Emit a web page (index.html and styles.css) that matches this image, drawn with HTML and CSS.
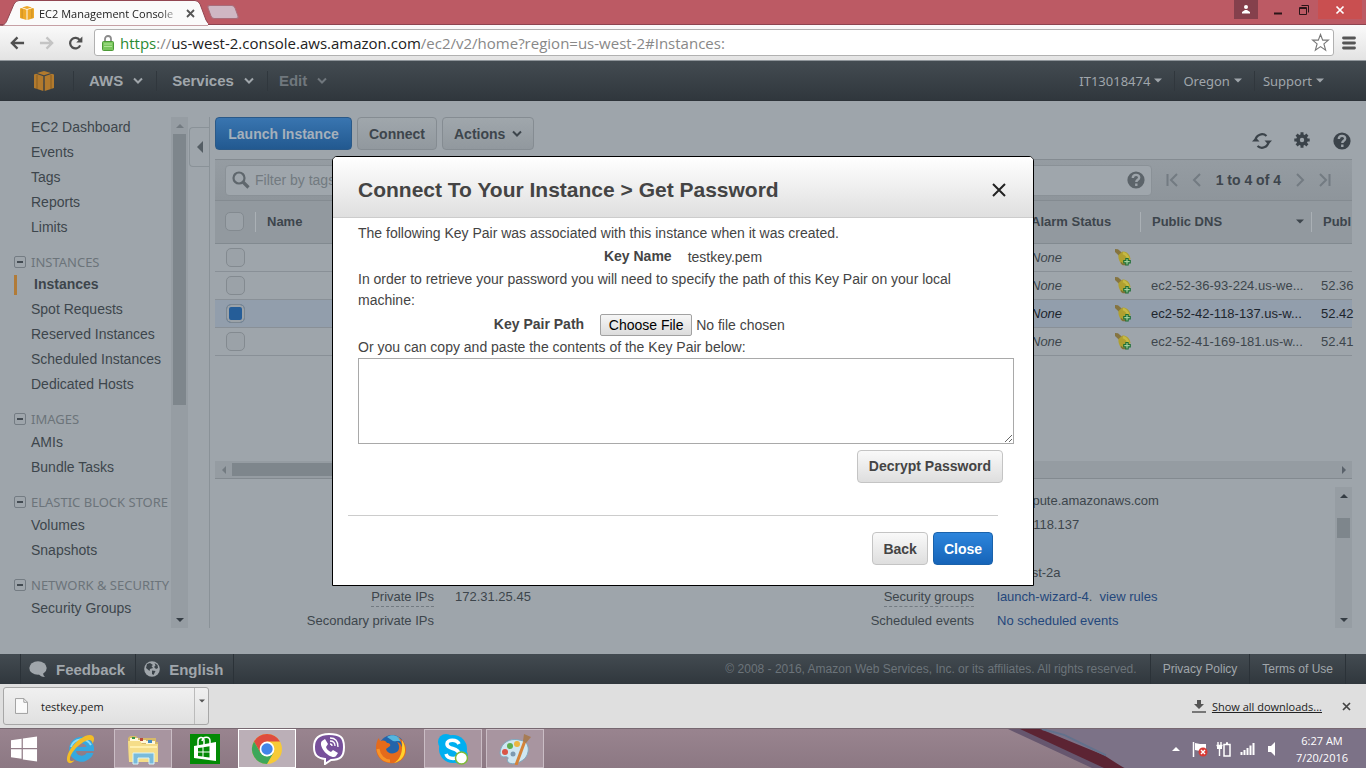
FILE: index.html
```html
<!DOCTYPE html>
<html lang="en">
<head>
<meta charset="utf-8">
<title>EC2 Management Console</title>
<link rel="stylesheet" href="styles.css">
</head>
<body>
<svg class="defs" aria-hidden="true">
  <symbol id="cube" viewBox="0 0 20 20"><path d="M10 0l7 2-7 2.200-7-2.200zM0 3.500l2-.7 7.300 2.400V20L0 17zM20 3.500l-2-.7-7.300 2.400V20L20 17z" fill="currentColor"/><path d="M3 4v14M17 4v14" stroke="#000" stroke-opacity=".12" stroke-width="2"/></symbol>
  <symbol id="chev" viewBox="0 0 10 8"><path d="M1 1.500L5 5.500L9 1.500" fill="none" stroke="currentColor" stroke-width="2"/></symbol>
  <symbol id="caret" viewBox="0 0 8 5"><path d="M0 .5h8L4 4.500z" fill="currentColor"/></symbol>
  <symbol id="help" viewBox="0 0 18 18"><circle cx="9" cy="9" r="8.600" fill="currentColor"/><path d="M5.800 7c0-4 6.400-4.200 6.400-.6 0 2.300-2.900 2.300-2.900 4.600M9.300 12.500v2.400" fill="none" stroke="#9da4aa" stroke-width="2.400"/></symbol>
  <symbol id="minus" viewBox="0 0 12 12"><rect x=".5" y=".5" width="11" height="11" rx="1.500" fill="none" stroke="#747c83"/><path d="M3 6h6" stroke="#434b52" stroke-width="2"/></symbol>
  <symbol id="bell" viewBox="0 0 18 18"><path d="M1 1l3 .3 4 3.500-3 3L1 4z" fill="#857440"/><path d="M4.500 7l4-3.500c4 0 7 2 8 7.500L10 16.500H7.500C5 13 4 10 4.500 7z" fill="#b0a02f"/><path d="M9 5c3 1 4.500 3 5.500 6" fill="none" stroke="#c6b944" stroke-width="2.500"/><path d="M7 14.500l2 2h3" stroke="#7c6f3a" fill="none" stroke-width="1.300"/><path d="M13 10v7.500M9.200 13.700h7.600" stroke="#1d6f35" stroke-width="3.400"/><path d="M13 11v5.400M10.300 13.700h5.400" stroke="#a4cf9f" stroke-width="1.200"/></symbol>
</svg>
<div class="screen">
  <header class="tabstrip">
    <div class="tab">
      <svg class="tab-shape" viewBox="0 0 208 26" preserveAspectRatio="none"><path d="M0 26C5 25 6 23 8 18L14 4Q16 .5 19 .5H195Q198 .5 200 4L206 20Q208 25 213 26z" fill="#fafafa" stroke="#924651"/></svg>
      <svg class="favicon"><use href="#cube"/></svg>
      <span class="tab-title">EC2 Management Console</span>
      <button class="tab-close" aria-label="Close tab"><svg viewBox="0 0 9 9"><path d="M1 1l7 7M8 1L1 8" stroke="#555" stroke-width="1.800"/></svg></button>
    </div>
    <button class="newtab" aria-label="New tab"></button>
    <div class="window-controls">
      <button class="user" aria-label="User"><svg viewBox="0 0 10 10"><circle cx="5" cy="2" r="2" fill="#fff"/><path d="M1 8.500V7l3-2h2l3 2v1.500z" fill="#fff"/></svg></button>
      <button class="win" aria-label="Minimize"><svg viewBox="0 0 10 10"><path d="M1 8.500h8" stroke="#2b1518" stroke-width="2"/></svg></button>
      <button class="win" aria-label="Restore"><svg viewBox="0 0 10 10"><path d="M2.500.5h7v7M.5 2.500h7v7h-7zM.5 3.500h7" fill="none" stroke="#2b1518"/></svg></button>
      <button class="win win-close" aria-label="Close window"><svg viewBox="0 0 10 10"><path d="M1.500 1.500l7 7M8.500 1.500l-7 7" stroke="#fff" stroke-width="1.700"/></svg></button>
    </div>
  </header>
  <div class="toolbar">
    <button class="nav-btn" aria-label="Back"><svg viewBox="0 0 16 14"><path d="M15 7H2M8 1L2 7l6 6" fill="none" stroke="#505050" stroke-width="2.500"/></svg></button>
    <button class="nav-btn" aria-label="Forward"><svg viewBox="0 0 16 14"><path d="M1 7h13M8 1l6 6-6 6" fill="none" stroke="#c4c4c4" stroke-width="2.500"/></svg></button>
    <button class="nav-btn" aria-label="Reload"><svg viewBox="0 0 16 14"><path d="M13 9.500A5.600 5.600 0 1 1 12.500 4" fill="none" stroke="#505050" stroke-width="2.400"/><path d="M15.300 0v6.500H8.800z" fill="#505050"/></svg></button>
    <div class="address">
      <svg class="lock" viewBox="0 0 12 16"><path d="M3 7V4a3 3 0 0 1 6 0v3" fill="none" stroke="#8b8b8b" stroke-width="1.800"/><rect x=".5" y="6.500" width="11" height="9" rx="1" fill="#79c65d" stroke="#4c9a37"/><path d="M2 9h8M2 11.500h8" stroke="#b0e497"/></svg>
      <span class="url"><span class="secure">https</span>://<span class="host">us-west-2.console.aws.amazon.com</span>/ec2/v2/home?region=us-west-2#Instances:</span>
      <button class="star" aria-label="Bookmark"><svg viewBox="0 0 20 20"><path d="M10 1.500l2.300 6h6l-4.700 4 1.800 6.500L10 14.300 4.600 18l1.800-6.500-4.700-4h6z" fill="#fff" stroke="#777" stroke-width="1.200"/></svg></button>
    </div>
    <button class="menu" aria-label="Menu"><svg viewBox="0 0 14 14"><path d="M1.500 2h11M1.500 7h11M1.500 12h11" stroke="#555" stroke-width="2.800" stroke-linecap="round"/></svg></button>
  </div>

  <div class="page">
    <header class="console-header">
      <a class="logo" href="#" aria-label="Home"><svg><use href="#cube"/></svg></a>
      <nav class="console-nav">
        <a class="nav-aws" href="#">AWS <svg class="chev"><use href="#chev"/></svg></a>
        <a class="nav-services" href="#">Services <svg class="chev"><use href="#chev"/></svg></a>
        <a class="nav-edit" href="#">Edit <svg class="chev"><use href="#chev"/></svg></a>
      </nav>
      <nav class="account-nav">
        <a href="#">IT13018474 <svg class="caret"><use href="#caret"/></svg></a>
        <a href="#">Oregon <svg class="caret"><use href="#caret"/></svg></a>
        <a href="#">Support <svg class="caret"><use href="#caret"/></svg></a>
      </nav>
    </header>

    <div class="body">
      <aside class="side">
        <nav class="side-nav">
          <a href="#">EC2 Dashboard</a><a href="#">Events</a><a href="#">Tags</a><a href="#">Reports</a><a href="#">Limits</a>
          <h2><svg><use href="#minus"/></svg>INSTANCES</h2>
          <a class="current" href="#">Instances</a><a href="#">Spot Requests</a><a href="#">Reserved Instances</a><a href="#">Scheduled Instances</a><a href="#">Dedicated Hosts</a>
          <h2><svg><use href="#minus"/></svg>IMAGES</h2>
          <a href="#">AMIs</a><a href="#">Bundle Tasks</a>
          <h2><svg><use href="#minus"/></svg>ELASTIC BLOCK STORE</h2>
          <a href="#">Volumes</a><a href="#">Snapshots</a>
          <h2><svg><use href="#minus"/></svg>NETWORK &amp; SECURITY</h2>
          <a href="#">Security Groups</a>
        </nav>
        <div class="vbar side-bar"><i class="arrow up dim"></i><i class="thumb"></i><i class="arrow down"></i></div>
        <div class="gutter"><button class="collapse" aria-label="Collapse"><i></i></button></div>
      </aside>

      <main class="content">
        <div class="actions">
          <button class="btn primary">Launch Instance</button>
          <button class="btn">Connect</button>
          <button class="btn">Actions <svg class="chev"><use href="#chev"/></svg></button>
          <div class="tools">
            <button aria-label="Refresh"><svg viewBox="0 0 20 18"><path d="M3.500 8A6.600 6.600 0 0 1 14.500 4M16.500 10A6.600 6.600 0 0 1 5.500 14" fill="none" stroke="currentColor" stroke-width="2.200"/><path d="M0 9.500h7.500L3.800 5.500zM12.500 8.500H20l-3.700 4z" fill="currentColor"/></svg></button>
            <button aria-label="Settings"><svg viewBox="0 0 20 18"><circle cx="10" cy="8" r="4" fill="none" stroke="currentColor" stroke-width="3.600"/><path d="M10 .3v3M10 12.700v3M2.300 8h3M14.700 8h3M4.600 2.600l2 2M13.400 11.400l2 2M4.600 13.400l2-2M13.400 4.600l2-2" stroke="currentColor" stroke-width="3"/></svg></button>
            <button aria-label="Help"><svg><use href="#help"/></svg></button>
          </div>
        </div>
        <section class="grid">
          <div class="filter">
            <div class="search">
              <svg class="magnify" viewBox="0 0 18 18"><circle cx="7" cy="7" r="5.500" fill="none" stroke="#5f676d" stroke-width="2.200"/><path d="M11 11l5.500 5.500" stroke="#5f676d" stroke-width="3.200"/></svg>
              <input type="text" aria-label="Filter instances" placeholder="Filter by tags and attributes or search by keyword">
              <svg class="search-help"><use href="#help"/></svg>
            </div>
            <div class="pager">
              <button aria-label="First page"><svg viewBox="0 0 12 14"><path d="M1.500 1v12M11 1L5 7l6 6"/></svg></button>
              <button aria-label="Previous page"><svg viewBox="0 0 12 14"><path d="M9 1L3 7l6 6"/></svg></button>
              <span>1 to 4 of 4</span>
              <button aria-label="Next page"><svg viewBox="0 0 12 14"><path d="M3 1l6 6-6 6"/></svg></button>
              <button aria-label="Last page"><svg viewBox="0 0 12 14"><path d="M10.500 1v12M1 1l6 6-6 6"/></svg></button>
            </div>
          </div>
          <table class="instances">
            <colgroup><col class="c-check"><col><col class="c-alarm"><col class="c-dns"><col class="c-ip"></colgroup>
            <thead><tr><th><input type="checkbox" aria-label="Select all"></th><th><span>Name</span></th><th>Alarm Status</th><th><span>Public DNS<svg class="caret"><use href="#caret"/></svg></span></th><th><span>Publ</span></th></tr></thead>
            <tbody>
              <tr><td><input type="checkbox" aria-label="Select instance 1"></td><td></td><td><div class="alarm"><em>None</em><svg><use href="#bell"/></svg></div></td><td></td><td></td></tr>
              <tr><td><input type="checkbox" aria-label="Select instance 2"></td><td></td><td><div class="alarm"><em>None</em><svg><use href="#bell"/></svg></div></td><td>ec2-52-36-93-224.us-we...</td><td>52.36</td></tr>
              <tr class="selected"><td><input type="checkbox" checked aria-label="Select instance 3"></td><td></td><td><div class="alarm"><em>None</em><svg><use href="#bell"/></svg></div></td><td>ec2-52-42-118-137.us-w...</td><td>52.42</td></tr>
              <tr><td><input type="checkbox" aria-label="Select instance 4"></td><td></td><td><div class="alarm"><em>None</em><svg><use href="#bell"/></svg></div></td><td>ec2-52-41-169-181.us-w...</td><td>52.41</td></tr>
            </tbody>
          </table>
          <div class="hbar"><i class="arrow left"></i><i class="thumb"></i><i class="arrow right"></i></div>
        </section>
        <section class="details">
          <dl class="detail-col left">
            <dt><span class="hint">Private IPs</span></dt><dd>172.31.25.45</dd>
            <dt>Secondary private IPs</dt><dd></dd>
          </dl>
          <dl class="detail-col right">
            <dt></dt><dd>2.compute.amazonaws.com</dd>
            <dt></dt><dd>52.42.118.137</dd>
            <dt></dt><dd></dd>
            <dt></dt><dd>us-west-2a</dd>
            <dt><span class="hint">Security groups</span></dt><dd><a href="#">launch-wizard-4</a>.&nbsp; <a href="#">view rules</a></dd>
            <dt>Scheduled events</dt><dd><a href="#">No scheduled events</a></dd>
          </dl>
          <div class="vbar detail-bar"><i class="arrow up"></i><i class="thumb"></i><i class="arrow down"></i></div>
        </section>
      </main>
    </div>

    <footer class="console-footer">
      <a class="feedback" href="#"><svg viewBox="0 0 18 16"><ellipse cx="9" cy="7" rx="8.700" ry="6.800" fill="currentColor"/><path d="M9 12c2 3 4 4 7 4-2-2-2-3-1.500-6z" fill="currentColor"/></svg>Feedback</a>
      <a class="language" href="#"><svg viewBox="0 0 16 16"><circle cx="8" cy="8" r="7.800" fill="currentColor"/><path d="M3 3l3-1 3 2-1.500 1L9 7l-3 1-.5 2L2 7zM10.500 2l3 2 .5 3-2 1-2-2 1.500-1.500zM8 9.500l3.500.5L9.500 14l-1.500-1z" fill="#3a4248"/></svg>English</a>
      <small>© 2008 - 2016, Amazon Web Services, Inc. or its affiliates. All rights reserved.</small>
      <a class="legal" href="#">Privacy Policy</a>
      <a class="legal last" href="#">Terms of Use</a>
    </footer>

    <div class="overlay">
      <section class="modal" role="dialog" aria-labelledby="modal-title">
        <header>
          <h1 id="modal-title">Connect To Your Instance &gt; Get Password</h1>
          <button class="modal-close" aria-label="Close dialog"><svg viewBox="0 0 14 14"><path d="M1 1l12 12M13 1L1 13" stroke="#222" stroke-width="2"/></svg></button>
        </header>
        <div class="modal-body">
          <p>The following Key Pair was associated with this instance when it was created.</p>
          <div class="field key-name"><strong>Key Name</strong><span>testkey.pem</span></div>
          <p>In order to retrieve your password you will need to specify the path of this Key Pair on your local machine:</p>
          <div class="field key-path"><label for="key-file">Key Pair Path</label><input id="key-file" type="file"></div>
          <label class="paste" for="key-text">Or you can copy and paste the contents of the Key Pair below:</label>
          <textarea id="key-text"></textarea>
          <div class="decrypt"><button class="btn light">Decrypt Password</button></div>
        </div>
        <footer><button class="btn light">Back</button><button class="btn bright">Close</button></footer>
      </section>
    </div>
  </div>

  <div class="downloads">
    <div class="download"><button class="file"><svg viewBox="0 0 14 17"><path d="M.5.500h9l4 4v12H.5z" fill="#fafafa" stroke="#999"/><path d="M9.500.5v4h4" fill="none" stroke="#999"/></svg>testkey.pem</button><button class="file-menu" aria-label="Download options"><svg class="caret"><use href="#caret"/></svg></button></div>
    <a class="show-all" href="#"><svg viewBox="0 0 14 13"><path d="M5 0h4v4h3L7 9 2 4h3z" fill="#555"/><path d="M0 12h14" stroke="#555" stroke-width="1.500"/></svg><span>Show all downloads...</span></a>
    <button class="bar-close" aria-label="Close downloads"><svg viewBox="0 0 9 9"><path d="M1 1l7 7M8 1L1 8" stroke="#444" stroke-width="1.700"/></svg></button>
  </div>

  <div class="taskbar">
    <svg class="wallpaper" viewBox="0 0 366 40" preserveAspectRatio="none"><path d="M40 0h326v40H124z" fill="#7c7287"/><path d="M8 0h34l83 40H92z" fill="#66566e"/><path d="M20 0h20l64 27 20 13h-20z" fill="#5c2433"/><path d="M42 0l22 6 42 21" fill="none" stroke="#62718c" stroke-width="2"/></svg>
    <button class="start" aria-label="Start"><svg viewBox="0 0 28 26"><path d="M0 4l11-1.700V12H0zM12.300 2L27 0v12H12.300zM0 13.300h11V23L0 21.500zM12.300 13.300H27V26l-14.700-2.200z" fill="#fff"/></svg></button>
    <button class="app" aria-label="Internet Explorer"><svg viewBox="0 0 32 32"><path d="M28.500 20A12.500 12.500 0 1 1 29 14.500v3.500H11c.5 5 8 6.500 10.500 2z" fill="#35a8e0"/><path d="M6 14a11 11 0 0 1 20-2" fill="none" stroke="#8bdcf7" stroke-width="2"/><path d="M11 14c1-5 9-5 10.500 0z" fill="#96818c"/><path d="M4 30c-6-3 2-18 11-24 6-4.500 13-6 14-1 .3 2-.5 4-1.500 6 0-5-4-5-9-2C10 14 4 23 5 27c.6 1.500 3 1 4.500.3C8 29.500 6 30.500 4 30z" fill="#f3bd27"/></svg></button>
    <button class="app open" aria-label="File Explorer"><svg viewBox="0 0 32 32"><path d="M1 5l2-2h6l2 2h18v4h2v19H2z" fill="#d6b969"/><path d="M3 5h8v4H3zM11 7h8v3h-8zM19 8h9v3h-9z" fill="#fff8d9"/><path d="M5 4h3v2H5z" fill="#399746"/><path d="M13 5h3v3h-3z" fill="#bc4938"/><path d="M21 7h4v3h-4z" fill="#438cc3"/><path d="M1 8h12l2 3h16v18H2z" fill="#f5dd88"/><path d="M3 14h27" stroke="#fff0ae" stroke-width="2"/><path d="M6 31V20h21v11h-5v-6H11v6z" fill="#79bbdb" stroke="#d6f3fa"/></svg></button>
    <button class="app" aria-label="Store"><svg viewBox="0 0 32 32"><path d="M1 1h30v30H1z" fill="#038a05"/><path d="M5 13l22-4v19L5 25z" fill="#fff"/><path d="M9 13V8c0-4 5-5 6-1v5M13 8c1-5 8-5 8 0v3" fill="none" stroke="#fff" stroke-width="1.500"/><path d="M9 15l4.500-.6v4H9zM14.500 14.200l6-1v5.200h-6zM9 19.500h4.500v4L9 23zM14.500 19.500h6v5l-6-.7z" fill="#038a05"/></svg></button>
    <button class="app open active" aria-label="Chrome"><svg viewBox="0 0 32 32"><circle cx="16" cy="16" r="15" fill="#f7ca37"/><path d="M3 8.500A15 15 0 0 1 29 8.500H16L9.500 20z" fill="#df4c3f"/><path d="M3 8.500l6.500 11.300 6.500 3.700 6.500-3.700L16 31A15 15 0 0 1 3 8.500z" fill="#3da75a"/><circle cx="16" cy="16" r="7.400" fill="#fff"/><circle cx="16" cy="16" r="5.700" fill="#4285e8"/></svg></button>
    <button class="app" aria-label="Viber"><svg viewBox="0 0 32 32"><path d="M16 1c11 0 15 3 15 13s-4 13-13 13l-6 4v-5C4 25 1 22 1 14S5 1 16 1z" fill="#77509b" stroke="#fff" stroke-width="2"/><path d="M9 8l3-2 3 5-2 3c1 3 3 4 5 5l2-2 5 3-2 3c-2 3-9-1-12-5S7 10 9 8z" fill="#fff"/><path d="M17 5c5 0 8 3 8 9M17 8c3.500 0 5 2 5 5M17 11q2 0 2 2" stroke="#fff" fill="none" stroke-width="1.300"/></svg></button>
    <button class="app" aria-label="Firefox"><svg viewBox="0 0 32 32"><circle cx="17" cy="15" r="13" fill="#2364aa"/><path d="M12 4c5-4 13-1 15 5-4-2-5 0-9-1z" fill="#55b6df"/><path d="M4 5c0 2 1 3 2 3 3-1 5 0 6 2 2 0 4 1 3 3l-4 3c1 5 8 6 12 2 2-3 1-7-1-9 4 1 4 4 5 5 0-4-2-8-5-10 7 3 9 8 9 13C31 35 1 35 1 15c0-4 1-8 3-10z" fill="#e56b1b"/><path d="M27 7c6 10 3 20-8 23 6-4 9-10 8-23z" fill="#ffd12c"/><path d="M3 16c1 7 6 12 12 12" stroke="#f89427" stroke-width="3" fill="none"/></svg></button>
    <button class="app open" aria-label="Skype"><svg viewBox="0 0 32 32"><circle cx="9" cy="9" r="8" fill="#00aff0"/><circle cx="23" cy="23" r="8" fill="#00aff0"/><circle cx="16" cy="16" r="14" fill="#00aff0"/><path d="M22 11C20 6 10 6 10 11c0 6 12 3 12 10 0 6-11 6-13 0" fill="none" stroke="#fff" stroke-width="3.600"/><circle cx="24.500" cy="25" r="6" fill="#fff" stroke="#7fba36" stroke-width="1.500"/></svg></button>
    <button class="app open" aria-label="Paint"><svg viewBox="0 0 32 32"><path d="M1 20C2 8 13 4 24 8c8 3 6 15 0 19-5 4-12 5-15 2-2-3 2-4-1-5-2-1-6 2-7-4z" fill="#cfe7f1" stroke="#7fa9bf"/><circle cx="6" cy="19" r="3" fill="#da5546"/><circle cx="11" cy="13" r="3" fill="#5eae50"/><circle cx="18" cy="11" r="3" fill="#ecb640"/><circle cx="14" cy="21" r="2.500" fill="#7e9aaf"/><path d="M27 5L17 32" stroke="#d48338" stroke-width="3"/><path d="M24 8l1-7 7 3-5 6z" fill="#a77c55"/></svg></button>
    <div class="tray">
      <svg viewBox="0 0 16 16"><path d="M4 10l4-4 4 4z" fill="#fff"/></svg>
      <svg viewBox="0 0 16 16"><path d="M1.500 1v15" stroke="#fff" stroke-width="1.500"/><path d="M3 2l5 1h6v7H8L3 9z" fill="#fff"/><circle cx="11" cy="11" r="4.500" fill="#d83a35"/><path d="M9 9l4 4M13 9l-4 4" stroke="#fff" stroke-width="1.400"/></svg>
      <svg viewBox="0 0 16 16"><path d="M2 1v3M5 1v3M.5 4.500h6M3.500 5v10" stroke="#fff" stroke-width="1.400"/><path d="M1 5h5v3H1z" fill="#fff"/><path d="M8 3.500h6V15H8zM10 2h2" fill="none" stroke="#fff" stroke-width="1.500"/></svg>
      <svg viewBox="0 0 16 16"><path d="M1.500 11v3M4.500 9v5M7.500 7v7M10.500 4.500V14M13.500 2v12" stroke="#fff" stroke-width="2"/></svg>
      <svg viewBox="0 0 16 16"><path d="M4 5h3l4-4v14l-4-4H4z" fill="#fff"/></svg>
    </div>
    <div class="clock"><time>6:27 AM</time><time>7/20/2016</time></div>
  </div>
</div>
</body>
</html>
```
FILE: styles.css
```css
* { box-sizing: border-box; }
body { margin: 0; font: 14px "Liberation Sans", Arial, sans-serif; color: #3d454c; }
button { margin: 0; padding: 0; border: 0; background: none; color: inherit; font: inherit; }
a { color: inherit; text-decoration: none; }
svg { display: block; flex: none; }
h1, h2, p, dl, dd { margin: 0; }
.defs { position: absolute; width: 0; height: 0; }
.screen { display: flex; flex-direction: column; height: 100vh; min-height: 768px; overflow: hidden; }

.tabstrip { display: flex; flex: none; height: 25px; background: #bc5a64; border-bottom: 1px solid #8d4450; }
.tab { position: relative; display: flex; align-items: center; gap: 5px; width: 208px; height: 26px; padding: 0 13px 0 20px; }
.tab-shape { position: absolute; inset: 0; width: 100%; height: 100%; }
.favicon { position: relative; width: 14px; height: 14px; color: #efa929; }
.tab-title { position: relative; flex: 1; overflow: hidden; white-space: nowrap; font: 11px "Open Sans", sans-serif; color: #222; mask-image: linear-gradient(90deg, #000 85%, transparent); }
.tab-close { position: relative; }
.tab-close svg, .bar-close svg { width: 9px; height: 9px; }
.newtab { align-self: center; width: 28px; height: 14px; margin-left: 1px; background: #cfb7c3; border: 1px solid #a86d7a; border-radius: 3px; transform: skewX(20deg); }
.window-controls { display: flex; align-items: flex-start; margin-left: auto; padding-right: 4px; }
.window-controls button { display: grid; place-items: center; width: 26px; height: 19px; }
.window-controls svg { width: 10px; height: 10px; }
.window-controls .user { width: 24px; margin-right: 7px; background: #85404c; }
.window-controls .win-close { width: 44px; margin-left: 1px; background: #c94f50; }

.toolbar { display: flex; flex: none; align-items: center; gap: 14px; height: 35px; padding: 0 10px; background: linear-gradient(#fafafa, #e3e3e3); }
.nav-btn svg { width: 15px; height: 14px; }
.address { display: flex; flex: 1; align-items: center; gap: 6px; height: 27px; margin-left: -3px; margin-right: -6px; padding: 0 3px 0 7px; background: #fff; border: 1px solid #b1b1b1; border-radius: 3px; }
.lock { width: 12px; height: 16px; }
.url { flex: 1; font: 15px "Open Sans", sans-serif; color: #888; }
.secure { color: #298a32; }
.host { color: #222; }
.star svg { width: 19px; height: 19px; }
.menu svg { width: 14px; height: 14px; }

.page { position: relative; display: flex; flex: 1; flex-direction: column; min-height: 0; background: #9ea5ab; }
.console-header { display: flex; flex: none; align-items: center; height: 41px; padding: 0 30px 0 34px; background: linear-gradient(#434b51, #30373d); border-top: 1px solid #90969b; border-bottom: 1px solid #2d3339; color: #a0a6ab; }
.logo svg { width: 20px; height: 20px; color: #b27a2d; }
.console-nav, .account-nav { display: flex; }
.console-nav { margin-left: 19px; font-size: 15px; font-weight: bold; }
.console-nav a, .account-nav a { display: flex; align-items: center; height: 20px; border-left: 1px solid #30373d; }
.console-nav a { padding: 0 13px 0 15px; gap: 10px; }
.console-nav .nav-edit { padding-left: 11px; color: #70777d; }
.chev { width: 10px; height: 8px; }
.caret { width: 8px; height: 5px; }
.account-nav { margin-left: auto; font: 13px "Noto Sans", sans-serif; }
.account-nav a { padding: 0 12px 0 8px; gap: 4px; }
.account-nav a:first-child { border: 0; }

.body { display: flex; flex: 1; min-height: 0; padding: 16px 14px 26px 0; }
.side { display: flex; flex: none; width: 210px; }
.side-nav { width: 171px; margin-top: -2px; }
.side-nav a { display: block; height: 25px; padding-left: 31px; line-height: 25px; }
.side-nav h2 { display: flex; align-items: center; gap: 5px; height: 20px; margin: 12px 0 1px; padding-left: 14px; white-space: nowrap; font: 13px "Noto Sans", sans-serif; color: #6c747a; }
.side-nav h2 svg { width: 12px; height: 12px; }
.side-nav .current { height: 20px; margin: 3px 0 2px 14px; padding-left: 17px; border-left: 3px solid #b17b38; font-weight: bold; line-height: 19px; }
.vbar { display: flex; flex-direction: column; align-items: center; width: 17px; background: #969da3; }
.thumb { background: #7e868c; }
.arrow { width: 17px; height: 17px; display: grid; place-items: center; }
.arrow::before { content: ""; border: 4px solid transparent; }
.arrow.up::before { border-top: 0; border-bottom-color: #353d44; }
.arrow.down::before { border-bottom: 0; border-top-color: #353d44; }
.arrow.left::before { border-left: 0; border-right-color: #737b81; }
.arrow.right::before { border-right: 0; border-left-color: #59616a; }
.arrow.up.dim::before { border-bottom-color: #737b81; }
.side-bar .thumb { width: 13px; height: 271px; }
.vbar .down { margin-top: auto; }
.gutter { flex: 1; border-right: 1px solid #8a9298; }
.collapse { display: grid; place-items: center; width: 20px; height: 40px; margin: 10px 0 0 1px; background: #9ea5ab; border: 1px solid #8a9298; border-right: 0; border-radius: 4px 0 0 4px; }
.collapse i { border: 6px solid transparent; border-left: 0; border-right-color: #555e65; }

.content { display: flex; flex: 1; flex-direction: column; min-width: 0; padding-left: 5px; }
.actions { display: flex; align-items: flex-start; gap: 5px; height: 33px; }
.btn { display: flex; align-items: center; justify-content: center; gap: 7px; height: 33px; padding: 0 11px; background: linear-gradient(#a0a7ac, #91989e); border: 1px solid #858c92; border-radius: 4px; font-weight: bold; }
.primary { width: 137px; background: linear-gradient(#3975b0, #225990); border-color: #2a5988; color: #a5b0bb; }
.tools { display: flex; align-self: flex-end; gap: 20px; margin-left: auto; }
.tools svg { width: 20px; height: 18px; color: #3b434a; }
.grid { display: flex; flex-direction: column; height: 320px; margin-top: 9px; border-bottom: 1px solid #838a90; }
.filter { display: flex; flex: none; align-items: center; gap: 14px; height: 42px; padding: 0 21px 0 10px; background: linear-gradient(#959ca2, #8e959b); border-top: 1px solid #848b91; border-bottom: 1px solid #848b91; }
.search { display: flex; flex: 1; align-items: center; gap: 5px; height: 31px; padding: 0 6px; background: #9fa6ac; border: 1px solid #8a9197; border-radius: 4px; }
.search input { flex: 1; min-width: 0; padding: 0; background: none; border: 0; font: 14px "Liberation Sans", Arial, sans-serif; }
.search input::placeholder { color: #727a80; }
.magnify, .search-help { width: 18px; height: 18px; color: #5c646a; }
.pager { display: flex; align-items: center; gap: 13px; font-weight: bold; }
.pager svg { width: 12px; height: 14px; fill: none; stroke: #737b82; stroke-width: 2; }
.instances { width: 100%; table-layout: fixed; border-collapse: collapse; }
.c-check { width: 40px; }
.c-alarm { width: 120px; }
.c-dns { width: 171px; }
.c-ip { width: 41px; }
.instances th { height: 42px; padding: 0 0 0 11px; background: #92999f; border-bottom: 1px solid #828a90; text-align: left; font-size: 13px; }
.instances th span { display: flex; align-items: center; justify-content: space-between; height: 20px; margin-left: -11px; padding: 0 7px 0 11px; border-left: 1px solid #aab0b5; }
.instances th:first-child { padding-left: 10px; }
.instances td { height: 28px; padding: 0 0 0 11px; border-bottom: 1px solid #899097; white-space: nowrap; font-size: 13px; }
.instances td:last-child { padding-left: 10px; }
.instances th:last-child span { padding-right: 0; }
.instances input { display: block; appearance: none; width: 19px; height: 19px; margin: 0; border: 1px solid #838a90; border-radius: 5px; background: #9ba2a8; }
.instances input:checked { background: #255d98; border: 1px solid #7c8791; box-shadow: inset 0 0 0 2px #9ba2a8; }
.instances .selected { background: #929eac; color: #1d252d; }
.alarm { display: flex; align-items: center; justify-content: space-between; padding: 0 8px 0 0; }
.alarm svg { width: 18px; height: 18px; }
.hbar { display: flex; align-items: center; height: 17px; margin-top: auto; background: #959ca2; }
.hbar .thumb { width: 68%; height: 13px; }
.hbar .right { margin-left: auto; }
.details { display: flex; flex: 1; min-height: 0; margin-top: 8px; }
.detail-col { display: grid; grid-template-columns: 219px 1fr; column-gap: 21px; grid-auto-rows: 24px; align-content: end; flex: 1; font-size: 13px; line-height: 16px; white-space: nowrap; }
.detail-col.right { grid-template-columns: 199px 1fr; column-gap: 23px; }
.detail-col dt, .detail-col dd { padding-top: 9px; }
.detail-col dt { text-align: right; }
.hint { display: inline-block; height: 18px; border-bottom: 1px dashed #727a81; }
.detail-col a { color: #24477b; }
.detail-bar .thumb { width: 13px; height: 20px; margin-top: 14px; }

.console-footer { display: flex; flex: none; align-items: stretch; height: 30px; padding: 0 20px; background: linear-gradient(#434b51, #30373d); color: #a0a6ab; }
.console-footer a { display: flex; align-items: center; border-left: 1px solid #2b3238; }
.feedback, .language { gap: 9px; padding: 0 10px 0 8px; font-size: 15px; font-weight: bold; }
.feedback svg { width: 18px; height: 16px; }
.language svg { width: 16px; height: 16px; }
.console-footer small { margin: 0 13px 0 auto; align-self: center; font-size: 12px; color: #6c747a; }
.console-footer .legal { padding: 0 12px; font-size: 12px; }
.console-footer .last { border-right: 1px solid #2b3238; }
.console-footer .language { border-right: 1px solid #2b3238; }

.overlay { position: absolute; inset: 0; display: flex; align-items: center; justify-content: center; padding-bottom: 2px; }
.modal { width: 702px; background: #fff; border: 1px solid #000; border-radius: 5px 5px 0 0; color: #444; }
.modal header { display: flex; align-items: center; justify-content: space-between; height: 61px; padding: 5px 27px 0 25px; background: linear-gradient(#fff, #dfdfdf); border-bottom: 1px solid #ccc; border-radius: 4px 4px 0 0; }
.modal h1 { font-size: 21px; line-height: 26px; }
.modal-close svg { width: 14px; height: 14px; }
.modal-body { padding: 5px 15px 0 25px; line-height: 21px; }
.modal-body p { padding-right: 20px; }
.field { display: flex; justify-content: center; gap: 16px; padding-right: 10px; }
.key-name { height: 25px; padding-top: 2px; }
.key-name span { padding-top: 1px; }
.key-path { height: 26px; padding-top: 3px; font-weight: bold; }
.key-path input { width: 272px; height: 24px; font: 14px "Liberation Sans", Arial, sans-serif; color: #444; }
.key-path input::file-selector-button { width: 92px; height: 22px; margin-right: 4px; padding: 0; background: linear-gradient(#f6f6f6, #dcdcdc); border: 1px solid #a2a2a2; border-radius: 2px; color: #000; font: 14px "Liberation Sans", Arial, sans-serif; }
.paste { display: block; }
.modal textarea { display: block; width: 656px; height: 86px; border: 1px solid #a9a9a9; }
.decrypt { display: flex; justify-content: flex-end; padding: 6px 15px 32px 0; }
.light { background: linear-gradient(#f9f9f9, #dedede); border-color: #c4c4c4; color: #444; }
.bright { background: linear-gradient(#2d85dc, #1664b8); border-color: #1a62ab; color: #fff; }
.modal footer { display: flex; justify-content: flex-end; gap: 5px; margin: 0 35px 0 15px; padding: 16px 5px 20px 0; border-top: 1px solid #ccc; }
.modal footer .btn { padding: 0 10px; }

.downloads { display: flex; flex: none; align-items: center; height: 44px; padding: 0 15px 0 3px; background: #dfdfdf; font: 11px "Open Sans", sans-serif; color: #222; }
.download { display: flex; width: 206px; height: 38px; background: linear-gradient(#f0f0f0, #e0e0e0); border: 1px solid #a7a7a7; border-radius: 3px; }
.file { display: flex; flex: 1; align-items: center; gap: 13px; padding-left: 11px; }
.file svg { width: 13px; height: 16px; }
.file-menu { display: grid; place-items: start center; width: 14px; padding-top: 11px; border-left: 1px solid #bbb; color: #555; }
.file-menu .caret { width: 6px; height: 4px; }
.show-all { display: flex; align-items: center; gap: 6px; margin-left: auto; text-decoration: underline; }
.show-all svg { width: 14px; height: 13px; }
.bar-close { margin-left: 20px; }

.taskbar { position: relative; display: flex; flex: none; gap: 4px; height: 40px; background: linear-gradient(#99848f, #8c7883); border-top: 1px solid #776871; }
.wallpaper { position: absolute; top: 0; right: 0; width: 366px; height: 100%; }
.taskbar button { display: grid; place-items: center; }
.start { width: 48px; }
.start svg { width: 27px; height: 26px; }
.app { width: 58px; }
.app svg { width: 32px; height: 32px; }
.open { background: #a895a0; border: 1px solid #cabdc5; }
.active { background: #bbafb7; border-color: #fff; }
.tray { position: relative; display: flex; align-items: center; gap: 8px; margin-left: auto; }
.tray svg { width: 16px; height: 16px; }
.clock { position: relative; display: flex; flex-direction: column; justify-content: center; width: 66px; margin: 0 11px 0 5px; text-align: center; color: #fff; font: 11px/17px "Open Sans", sans-serif; }
```
